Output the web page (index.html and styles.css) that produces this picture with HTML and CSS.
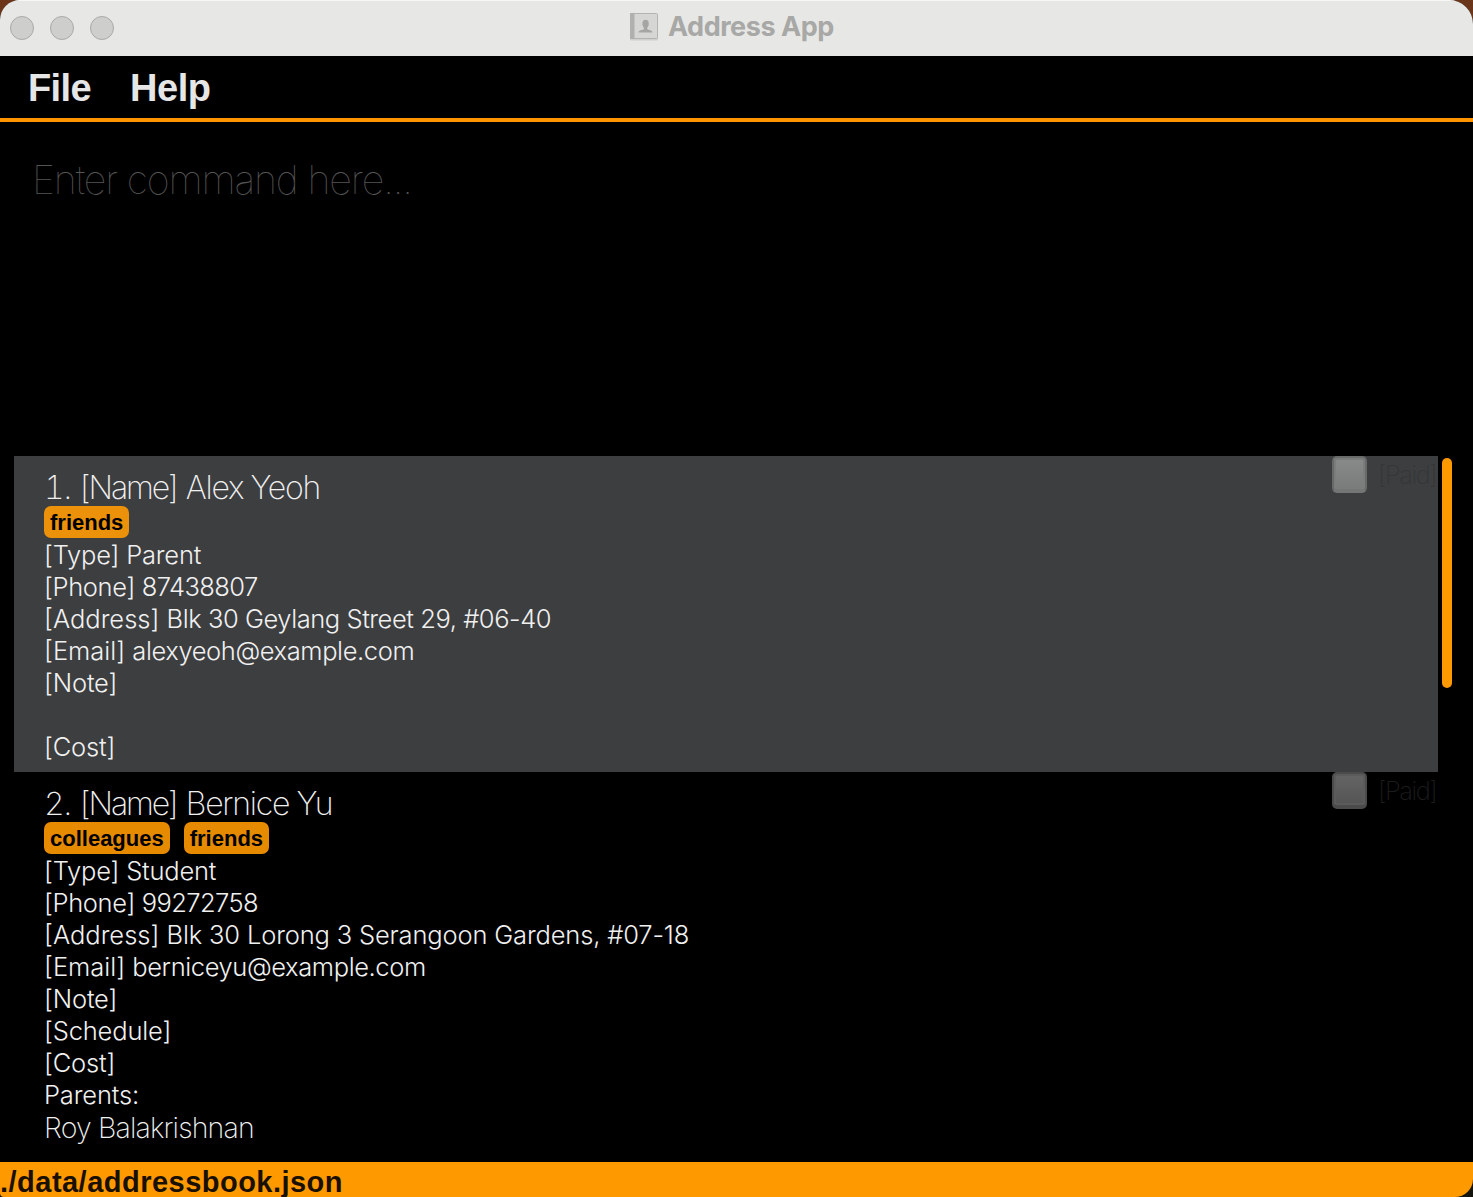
FILE: index.html
```html
<!DOCTYPE html>
<html lang="en">
<head>
<meta charset="utf-8">
<title>Address App</title>
<link rel="stylesheet" href="styles.css">
</head>
<body>
<div class="window">
  <header class="titlebar">
    <div class="lights"><i></i><i></i><i></i></div>
    <div class="title">
      <svg class="book" width="30" height="30" viewBox="0 0 30 30">
        <rect x="1" y="2.5" width="28" height="26" rx="1.5" fill="#cfcfce"/>
        <rect x="1.5" y="1.5" width="27" height="25" rx="1" fill="#d6d6d5" stroke="#b3b3b2"/>
        <rect x="1" y="1" width="4.500" height="26" fill="#b0b0af"/>
        <path d="M9.500 20.500c0-2.700 4.700-2.300 5.400-3.600.3-.8-.2-1.300-.8-2.300-1.100-2-1.300-6.800 2.500-6.800s3.600 4.800 2.500 6.800c-.6 1-1.100 1.500-.8 2.300.7 1.300 5.200.9 5.200 3.600z" fill="#a5a5a4"/>
      </svg>
      <span>Address App</span>
    </div>
  </header>
  <nav class="menubar"><span class="file">File</span><span class="help">Help</span></nav>
  <div class="command"><span>Enter command here...</span></div>
  <main class="list">
    <div class="cards">
      <section class="card selected">
        <div class="info">
          <div class="name">1. <span class="label">[Name]</span> Alex Yeoh</div>
          <div class="tags"><span>friends</span></div>
          <div class="row type">[Type] Parent</div>
          <div class="row phone"><span class="label">[Phone] </span>87438807</div>
          <div class="row address"><span class="label">[Address] </span>Blk 30 Geylang Street 29, #06-40</div>
          <div class="row email"><span class="label">[Email] </span>alexyeoh@example.com</div>
          <div class="row">[Note]</div>
          <div class="row"></div>
          <div class="row">[Cost]</div>
        </div>
        <div class="paid"><i class="box"></i><span>[Paid]</span></div>
      </section>
      <section class="card">
        <div class="info">
          <div class="name">2. <span class="label">[Name]</span> Bernice Yu</div>
          <div class="tags"><span>colleagues</span><span>friends</span></div>
          <div class="row type">[Type] Student</div>
          <div class="row phone"><span class="label">[Phone] </span>99272758</div>
          <div class="row"><span class="label">[Address] </span>Blk 30 Lorong 3 Serangoon Gardens, #07-18</div>
          <div class="row email"><span class="label">[Email] </span>berniceyu@example.com</div>
          <div class="row">[Note]</div>
          <div class="row">[Schedule]</div>
          <div class="row">[Cost]</div>
          <div class="row">Parents:</div>
          <div class="row parent">Roy Balakrishnan</div>
        </div>
        <div class="paid"><i class="box"></i><span>[Paid]</span></div>
      </section>
    </div>
    <div class="scroll"></div>
  </main>
  <footer class="status"><span>./data/addressbook.json</span></footer>
</div>
</body>
</html>
```
FILE: styles.css
```css
* { box-sizing: border-box; }
body { margin: 0; background: linear-gradient(#6b3519 0 40px, #15150f 40px); overflow: hidden; }
.window {
  width: 1473px; height: 1197px; display: flex; flex-direction: column;
  background: #000; border-radius: 20px 24px 18px 4px; overflow: hidden;
  font-family: Inter, "Liberation Sans", sans-serif; white-space: nowrap;
}
.titlebar {
  height: 56px; flex: none; background: #e7e7e5; border-top: 1px solid #f6f6f5;
  display: grid; grid-template-columns: 629px 1fr; align-items: center;
}
.lights { display: flex; gap: 16px; padding: 0 0 2px 10px; }
.lights i { width: 24px; height: 24px; border-radius: 50%; background: #cececd; border: 1px solid #a9a9a8; }
.title { display: flex; align-items: center; gap: 9px; color: #a8a8a6; font-size: 27px; font-weight: 700; letter-spacing: -0.45px; height: 51px; align-self: start; }
.menubar {
  height: 66px; flex: none; border-bottom: 4px solid #ff9500; color: #e6e6e6;
  font: bold 38px/64px "Liberation Sans", Arial, sans-serif; letter-spacing: -0.65px; padding-left: 28px; display: flex; gap: 39px;
}
.help { letter-spacing: -0.4px; }
.command { height: 334px; flex: none; padding: 33px 0 0 32px; color: #555; font-size: 39.500px; font-weight: 140; letter-spacing: -1.2px; line-height: 50px; }
.list { flex: 1; min-height: 0; display: flex; padding-left: 14px; overflow: hidden; }
.cards { width: 1424px; }
.card { display: flex; justify-content: space-between; padding-left: 30px; color: #f0f0f0; }
.card.selected { background: #3d3e40; }
.info { padding: 10px 0; }
.name { height: 40px; line-height: 43px; font-size: 32px; font-weight: 150; letter-spacing: -1.25px; font-variant-numeric: tabular-nums; }
.name .label { letter-spacing: -2.1px; }
.tags { display: flex; gap: 14px; height: 32px; }
.tags span {
  background: #e68a00; color: #000; border-radius: 7px; padding: 0 6px;
  font: bold 22px/33px "Liberation Sans", Arial, sans-serif;
}
.selected .tags span { background: #eb910a; }
.row { height: 32px; line-height: 33px; font-size: 25.500px; font-weight: 300; letter-spacing: -0.16px; }
.row .label { letter-spacing: 0; }
.type { letter-spacing: -0.2px; }
.phone { letter-spacing: -0.6px; }
.phone .label { letter-spacing: -0.35px; }
.address { letter-spacing: -0.44px; }
.email { letter-spacing: -0.4px; }
.parent { line-height: 36px; font-size: 28.500px; font-weight: 150; letter-spacing: -0.85px; }
.paid { display: flex; height: 38px; width: 106px; color: #1c1c1c; font-size: 25.500px; font-weight: 200; letter-spacing: -1.5px; line-height: 38px; gap: 11px; }
.selected .paid { color: #353637; }
.box { width: 35px; height: 37px; flex: none; border-radius: 5px; border: 2px solid #4b4b4b; border-bottom-width: 4px; background: linear-gradient(#656565, #545454); box-shadow: inset 0 0 0 2px #5b5b5b; }
.selected .box { border-color: #686a6a; border-bottom-color: #747676; background: linear-gradient(#898b8b, #797b7b); box-shadow: inset 0 0 0 2px #7b7d7d; }
.scroll { width: 10px; height: 230px; margin: 2px 0 0 4px; background: #ff9900; border-radius: 5px; }
.status { height: 35px; flex: none; background: #ff9900; color: #191000; font: bold 29px/40px "Liberation Sans", Arial, sans-serif; letter-spacing: 0.48px; }
```
